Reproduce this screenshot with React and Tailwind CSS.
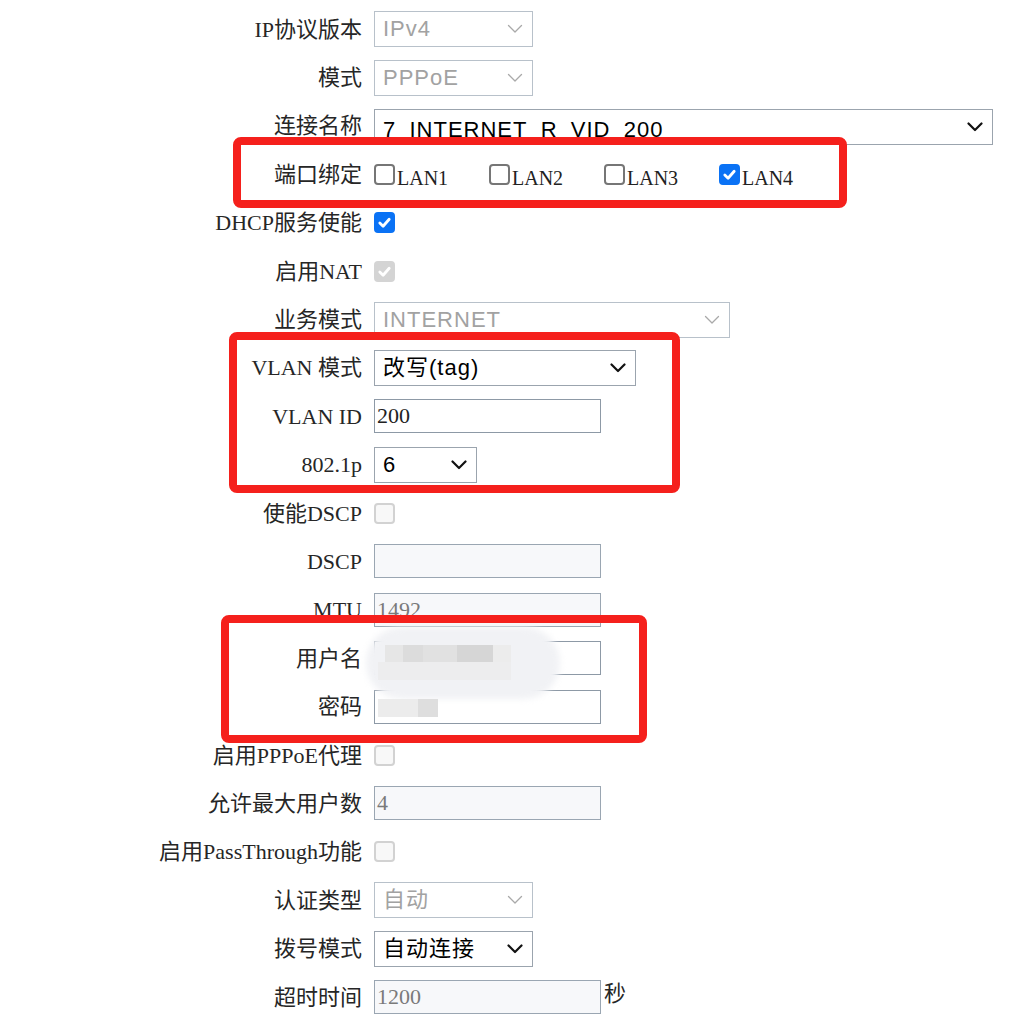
import React from 'react';

const labelFont = { fontFamily: '"Liberation Serif", "Noto Sans CJK SC", serif' };
const valueFont = { fontFamily: '"Liberation Sans", "Noto Sans CJK SC", sans-serif' };

function Chevron({ disabled }) {
  return (
    <svg width="16" height="10" viewBox="0 0 16 10" className="shrink-0">
      <path
        d="M1.5 1.5 L8 8 L14.5 1.5"
        fill="none"
        stroke={disabled ? '#a9a9a9' : '#111'}
        strokeWidth={disabled ? 1.3 : 2.2}
        strokeLinecap="round"
        strokeLinejoin="round"
      />
    </svg>
  );
}

function SelectBox({ value, disabled, w, low }) {
  return (
    <div
      className={`flex h-[36px] items-center justify-between border pl-[8px] pr-[9px] bg-white ${w} ${disabled ? 'border-[#b8c1ca] text-[#a2a2a2]' : 'border-[#9ba4ae] text-black'}`}
      style={valueFont}
    >
      <span className={`text-[22px] tracking-[1px] whitespace-nowrap leading-none ${low ? 'mt-[5px]' : ''}`}>{value}</span>
      <Chevron disabled={disabled} />
    </div>
  );
}

function TextBox({ value, disabled, children }) {
  return (
    <div className="flex items-center">
      <div
        className={`flex h-[34px] w-[227px] items-center border pl-[2px] text-[22px] leading-none ${disabled ? 'bg-[#f7f8fa] border-[#9aa6b2] text-[#7a7a7a]' : 'bg-white border-[#8d99a6] text-[#222]'}`}
        style={labelFont}
      >
        {value}
      </div>
      {children}
    </div>
  );
}

function Check({ checked, disabled }) {
  let box = 'bg-white border-[#767676]';
  if (checked && !disabled) box = 'bg-[#0a72f5] border-[#0a72f5]';
  if (checked && disabled) box = 'bg-[#d4d4d4] border-[#d4d4d4]';
  if (!checked && disabled) box = 'bg-[#f8f8f8] border-[#d2d2d2]';
  return (
    <span className={`flex h-[21px] w-[21px] shrink-0 items-center justify-center rounded-[4px] border-2 ${box}`}>
      {checked && (
        <svg width="15" height="15" viewBox="0 0 16 16">
          <path d="M3 8.5 L6.5 12 L13 4.5" fill="none" stroke="white" strokeWidth="3" strokeLinecap="round" strokeLinejoin="round" />
        </svg>
      )}
    </span>
  );
}

function Row({ label, children }) {
  return (
    <div className="flex h-[48.4px] items-center">
      <div className="w-[362px] shrink-0 text-right text-[22px] text-[#262626] whitespace-nowrap" style={labelFont}>
        {label}
      </div>
      <div className="ml-[12px] flex items-center">{children}</div>
    </div>
  );
}

function RedBox({ pos }) {
  return <div className={`pointer-events-none absolute rounded-[8px] border-[8px] border-[#f5201c] ${pos}`} />;
}

export default function App() {
  const ports = [
    { name: 'LAN1', on: false },
    { name: 'LAN2', on: false },
    { name: 'LAN3', on: false },
    { name: 'LAN4', on: true },
  ];

  return (
    <div className="relative h-[1033px] w-[1022px] overflow-hidden bg-white pt-[5px]">
      <Row label="IP协议版本"><SelectBox value="IPv4" disabled w="w-[159px]" /></Row>
      <Row label="模式"><SelectBox value="PPPoE" disabled w="w-[159px]" /></Row>
      <Row label="连接名称">
        <div className="mt-[3px]">
          <SelectBox value="7_INTERNET_R_VID_200" w="w-[619px]" low />
        </div>
      </Row>
      <Row label="端口绑定">
        <div className="flex items-center">
          {ports.map(p => (
            <div key={p.name} className="flex w-[115px] items-center">
              <Check checked={p.on} />
              <span className="ml-[2px] mt-[7px] text-[20px] text-[#222]" style={labelFont}>{p.name}</span>
            </div>
          ))}
        </div>
      </Row>
      <Row label="DHCP服务使能"><Check checked /></Row>
      <Row label="启用NAT"><Check checked disabled /></Row>
      <Row label="业务模式"><SelectBox value="INTERNET" disabled w="w-[356px]" /></Row>
      <Row label="VLAN 模式"><SelectBox value="改写(tag)" w="w-[262px]" /></Row>
      <Row label="VLAN ID"><TextBox value="200" /></Row>
      <Row label="802.1p"><SelectBox value="6" w="w-[103px]" /></Row>
      <Row label="使能DSCP"><Check disabled /></Row>
      <Row label="DSCP"><TextBox value="" disabled /></Row>
      <Row label="MTU"><TextBox value="1492" disabled /></Row>
      <Row label="用户名"><TextBox value="" /></Row>
      <Row label="密码"><TextBox value="" /></Row>
      <Row label="启用PPPoE代理"><Check disabled /></Row>
      <Row label="允许最大用户数"><TextBox value="4" disabled /></Row>
      <Row label="启用PassThrough功能"><Check disabled /></Row>
      <Row label="认证类型"><SelectBox value="自动" disabled w="w-[159px]" /></Row>
      <Row label="拨号模式"><SelectBox value="自动连接" w="w-[159px]" /></Row>
      <Row label="超时时间">
        <TextBox value="1200" disabled>
          <span className="-mt-[8px] ml-[3px] text-[22px] text-[#262626]" style={labelFont}>秒</span>
        </TextBox>
      </Row>

      {/* 打码区域 */}
      <div className="absolute left-[366px] top-[627px] h-[72px] w-[194px] rounded-[36px] bg-[#f1f2f5] blur-[3px]" />
      <div className="absolute left-[385px] top-[645px] h-[17px] w-[18px] bg-[#e6e6e6]" />
      <div className="absolute left-[403px] top-[645px] h-[17px] w-[20px] bg-[#dcdcdc]" />
      <div className="absolute left-[423px] top-[645px] h-[17px] w-[34px] bg-[#e1e1e1]" />
      <div className="absolute left-[457px] top-[645px] h-[17px] w-[36px] bg-[#d6d6d6]" />
      <div className="absolute left-[493px] top-[645px] h-[17px] w-[18px] bg-[#ececec]" />
      <div className="absolute left-[378px] top-[662px] h-[18px] w-[133px] bg-[#ededee]" />
      <div className="absolute left-[378px] top-[699px] h-[18px] w-[40px] bg-[#ececec]" />
      <div className="absolute left-[418px] top-[699px] h-[18px] w-[20px] bg-[#dedede]" />

      <RedBox pos="left-[233px] top-[137px] w-[614px] h-[71px]" />
      <RedBox pos="left-[229px] top-[332px] w-[451px] h-[161px]" />
      <RedBox pos="left-[221px] top-[615px] w-[426px] h-[128px]" />
    </div>
  );
}
